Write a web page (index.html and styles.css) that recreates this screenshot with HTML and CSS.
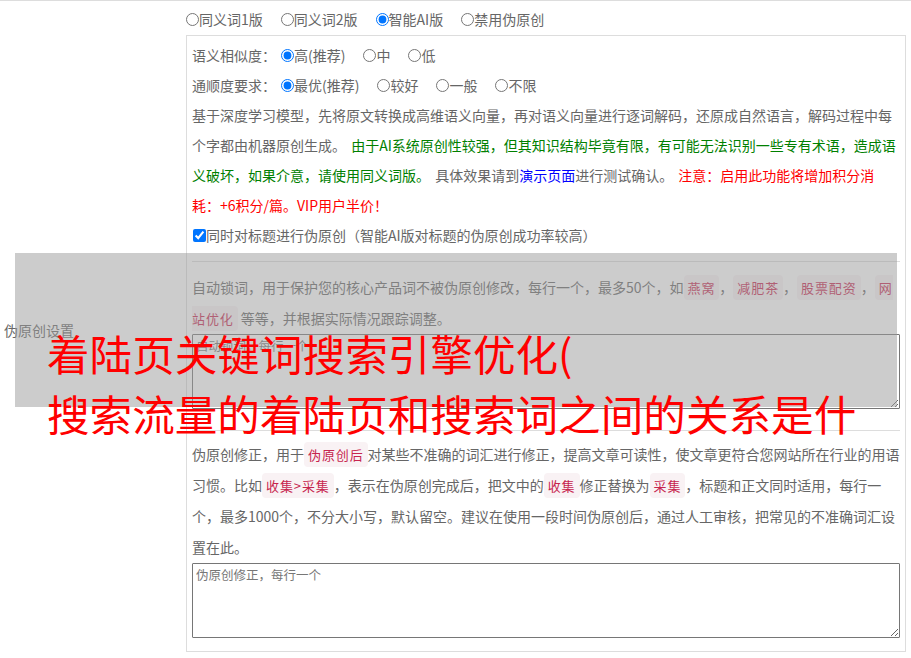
FILE: index.html
```html
<!DOCTYPE html>
<html lang="zh-CN">
<head>
<meta charset="utf-8">
<title>伪原创设置</title>
<link rel="stylesheet" href="styles.css">
</head>
<body>
<div class="page">
  <div class="label-cell">伪原创设置</div>
  <div class="main-cell">
    <div class="top-row">
      <label class="opt"><input type="radio" name="ver">同义词1版</label><label class="opt"><input type="radio" name="ver">同义词2版</label><label class="opt"><input type="radio" name="ver" checked>智能AI版</label><label class="opt"><input type="radio" name="ver">禁用伪原创</label>
    </div>
    <div class="box">
      <div class="row"><span class="row-label">语义相似度：</span><label class="opt"><input type="radio" name="sim" checked>高(推荐)</label><label class="opt"><input type="radio" name="sim">中</label><label class="opt"><input type="radio" name="sim">低</label></div>
      <div class="row"><span class="row-label">通顺度要求：</span><label class="opt"><input type="radio" name="flu" checked>最优(推荐)</label><label class="opt"><input type="radio" name="flu">较好</label><label class="opt"><input type="radio" name="flu">一般</label><label class="opt"><input type="radio" name="flu">不限</label></div>
      <p class="desc intro">基于深度学习模型，先将原文转换成高维语义向量，再对语义向量进行逐词解码，还原成自然语言，解码过程中每个字都由机器原创生成。 <span class="green">由于AI系统原创性较强，但其知识结构毕竟有限，有可能无法识别一些专有术语，造成语义破坏，如果介意，请使用同义词版。</span> 具体效果请到<a class="link" href="#">演示页面</a>进行测试确认。 <span class="red">注意：启用此功能将增加积分消耗：+6积分/篇。VIP用户半价！</span></p>
      <div class="row"><label class="chk"><input type="checkbox" checked>同时对标题进行伪原创（智能AI版对标题的伪原创成功率较高）</label></div>
      <div class="sec lock">
        <p class="desc tagged">自动锁词，用于保护您的核心产品词不被伪原创修改，每行一个，最多50个，如<code class="tag">燕窝</code>，<code class="tag">减肥茶</code>，<code class="tag">股票配资</code>，<code class="tag">网站优化</code> 等等，并根据实际情况跟踪调整。</p>
        <textarea class="area" placeholder="自动锁词，每行一个"></textarea>
      </div>
      <div class="sec fix">
        <p class="desc tagged">伪原创修正，用于<code class="tag">伪原创后</code>对某些不准确的词汇进行修正，提高文章可读性，使文章更符合您网站所在行业的用语习惯。比如<code class="tag">收集&gt;采集</code>，表示在伪原创完成后，把文中的<code class="tag">收集</code>修正替换为<code class="tag">采集</code>，标题和正文同时适用，每行一个，最多1000个，不分大小写，默认留空。建议在使用一段时间伪原创后，通过人工审核，把常见的不准确词汇设置在此。</p>
        <textarea class="area" placeholder="伪原创修正，每行一个"></textarea>
      </div>
    </div>
  </div>
  <div class="overlay">着陆页关键词搜索引擎优化(<br>搜索流量的着陆页和搜索词之间的关系是什</div>
</div>
</body>
</html>
```
FILE: styles.css
```css
html, body {
  margin: 0;
  padding: 0;
  background: #fff;
}
body {
  font-family: "Noto Sans CJK SC", "Microsoft YaHei", sans-serif;
  font-size: 14px;
  color: #666;
}
.page {
  position: relative;
  display: grid;
  grid-template-columns: 181px 1fr;
  border-top: 1px solid #ddd;
  min-height: 657px;
}
.label-cell {
  align-self: center;
  padding-left: 4px;
  line-height: 20px;
}
.main-cell {
  padding: 3px 0 7px;
}
.top-row {
  line-height: 30px;
  height: 30px;
  white-space: nowrap;
}
.opt {
  margin-right: 13px;
}
.opt input {
  margin: 3px 0 0 5px;
  vertical-align: -1px;
}
.box {
  margin: 1px 5px 0;
  border: 1px solid #ddd;
  padding: 4px 5px 13px;
  line-height: 30px;
}
.row {
  height: 30px;
  white-space: nowrap;
}
.desc {
  margin: 0;
}
.intro {
  word-spacing: 2px;
}
.tagged {
  line-height: 31px;
}
.green {
  color: #008000;
}
.red {
  color: #f00;
}
.link {
  color: #00f;
  text-decoration: none;
}
.chk input {
  margin: 0 0 0 1px;
  vertical-align: -1px;
}
.sec {
  border-top: 1px solid #ddd;
}
.lock {
  margin-top: 11px;
  padding-top: 10px;
}
.fix {
  margin-top: 21px;
  padding-top: 8px;
}
.tag {
  font-family: "Noto Sans CJK SC", sans-serif;
  font-size: 13px;
  line-height: 1;
  letter-spacing: 0.9px;
  color: #c7254e;
  background: #f9f2f4;
  padding: 3px 4px;
  border-radius: 4px;
}
.area {
  display: block;
  box-sizing: border-box;
  width: 100%;
  height: 75px;
  margin: 0;
  padding: 2px 3px;
  border: 1px solid #767676;
  border-radius: 1px;
  font-family: "Noto Sans CJK SC", sans-serif;
  font-size: 12.5px;
  line-height: 18px;
  color: #333;
  resize: vertical;
}
.area::placeholder {
  color: #777;
}
.overlay {
  position: absolute;
  left: 15px;
  top: 252px;
  width: 882px;
  height: 154px;
  box-sizing: border-box;
  padding: 70px 0 0 32px;
  background: rgba(153, 153, 153, 0.5);
  color: #f00;
  font-size: 42.6px;
  line-height: 60px;
  white-space: nowrap;
}
```
